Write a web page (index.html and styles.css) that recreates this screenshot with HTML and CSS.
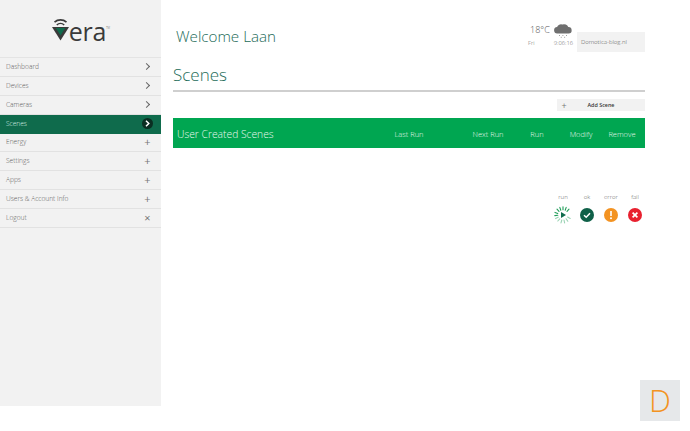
FILE: index.html
```html
<!DOCTYPE html>
<html lang="en">
<head>
    <meta charset="UTF-8">
    <title>Vera - Scenes</title>
    <link rel="stylesheet" href="styles.css">
</head>
<body>
    <div class="page">
        <aside class="sidebar">
            <div class="logo">
                <svg class="logo-mark" width="19" height="23" viewBox="0 0 19 23">
                    <path d="M3.500 4.200a9 9 0 0 1 12 0" fill="none" stroke="#3a3a3a" stroke-width="1.600"/>
                    <path d="M5.800 7a5.400 5.400 0 0 1 7.400 0" fill="none" stroke="#3a3a3a" stroke-width="1.600"/>
                    <path d="M1 9h17l-8.500 13.500z" fill="#3a3a3a"/>
                    <path d="M4.800 10h9.400l-4.700 7.500z" fill="#0f6b4c"/>
                </svg>
                <span class="logo-text">era</span><span class="logo-tm">TM</span>
            </div>
            <ul class="menu">
                <li class="menu-item"><span>Dashboard</span><i class="chev"></i></li>
                <li class="menu-item"><span>Devices</span><i class="chev"></i></li>
                <li class="menu-item"><span>Cameras</span><i class="chev"></i></li>
                <li class="menu-item active"><span>Scenes</span>
                    <svg width="11" height="11" viewBox="0 0 11 11"><circle cx="5.500" cy="5.500" r="5.500" fill="#0b2e22"/><path d="M4 2.800l2.800 2.700L4 8.200" fill="none" stroke="#fff" stroke-width="1.500"/></svg>
                </li>
                <li class="menu-item"><span>Energy</span><b class="sign">+</b></li>
                <li class="menu-item"><span>Settings</span><b class="sign">+</b></li>
                <li class="menu-item"><span>Apps</span><b class="sign">+</b></li>
                <li class="menu-item"><span>Users &amp; Account Info</span><b class="sign">+</b></li>
                <li class="menu-item"><span>Logout</span><b class="sign">×</b></li>
            </ul>
        </aside>

        <main class="content">
            <header class="top">
                <h2 class="welcome">Welcome Laan</h2>
                <div class="weather">
                    <div class="weather-row">
                        <span class="temp">18°C</span>
                        <svg width="20" height="16" viewBox="0 0 20 16">
                            <path d="M4.500 11.500a3.200 3.200 0 0 1-.4-6.400 4 4 0 0 1 5.200-2.600 4.600 4.600 0 0 1 6 2.600 3.200 3.200 0 0 1 .3 6.400z" fill="#6f6f6f"/>
                            <path d="M6 13.500h.8M9.500 13.500h.8M13 13.500h.8M7.800 15.300h.8M11.300 15.300h.8" stroke="#888" stroke-width="1"/>
                        </svg>
                    </div>
                    <div class="weather-row small">
                        <span>Fri</span><span>9:06:16</span>
                    </div>
                </div>
                <div class="site-box">Domotica-blog.nl</div>
            </header>

            <h1 class="title">Scenes</h1>

            <div class="actions">
                <div class="add-scene"><span class="add-plus">+</span><span class="add-label">Add Scene</span></div>
            </div>

            <div class="scene-head">
                <span class="scene-name">User Created Scenes</span>
                <span class="col col-last">Last Run</span>
                <span class="col col-next">Next Run</span>
                <span class="col col-run">Run</span>
                <span class="col col-modify">Modify</span>
                <span class="col col-remove">Remove</span>
            </div>

            <div class="legend">
                <div class="legend-item">
                    <span>run</span>
                    <svg width="18" height="18" viewBox="0 0 18 18">
                        <g stroke="#1f9d58" stroke-width="1.100" stroke-linecap="round" fill="none">
                            <path d="M9 .8v3M12.200 1.400l-1 2.800M15 3.200l-2 2.200M5.800 1.400l1 2.800M3 3.200l2 2.200M1 6.400l2.800 1M.8 9.600l3-.4" />
                            <path d="M1.600 12.600l2.600-1.400M3.800 15l2-2.200M7 16.900l.8-2.900M10.600 16.900l-.6-2.900M13.800 15.200l-1.700-2.400M16.200 12.400l-2.600-1.300" opacity=".45"/>
                        </g>
                        <path d="M7 6l5 3-5 3z" fill="#0f6b4c"/>
                    </svg>
                </div>
                <div class="legend-item">
                    <span>ok</span>
                    <svg width="14" height="14" viewBox="0 0 14 14"><circle cx="7" cy="7" r="7" fill="#0f6048"/><path d="M4 7.200l2.200 2 3.800-4" fill="none" stroke="#fff" stroke-width="1.500"/></svg>
                </div>
                <div class="legend-item">
                    <span>error</span>
                    <svg width="14" height="14" viewBox="0 0 14 14"><circle cx="7" cy="7" r="7" fill="#f39322"/><path d="M7 3v5" stroke="#fff" stroke-width="1.600"/><circle cx="7" cy="10.300" r="1" fill="#fff"/></svg>
                </div>
                <div class="legend-item">
                    <span>fail</span>
                    <svg width="14" height="14" viewBox="0 0 14 14"><circle cx="7" cy="7" r="7" fill="#e8202f"/><path d="M4.600 4.600l4.800 4.800M9.400 4.600l-4.800 4.800" stroke="#fff" stroke-width="1.700"/></svg>
                </div>
            </div>
        </main>
    </div>

    <div class="corner-tile">D</div>
</body>
</html>
```

FILE: styles.css
```css
* {
    box-sizing: border-box;
}
html, body {
    margin: 0;
    padding: 0;
}
body {
    width: 690px;
    height: 431px;
    position: relative;
    overflow: hidden;
    background: #fff;
    font-family: "Open Sans", sans-serif;
    font-weight: 300;
    color: #555;
}
.page {
    display: flex;
    align-items: flex-start;
}
.sidebar {
    width: 161px;
    height: 406px;
    flex: none;
    background: #f2f2f2;
}
.logo {
    height: 57px;
    display: flex;
    justify-content: center;
    align-items: flex-end;
    padding-bottom: 16px;
}
.logo-mark {
    margin-right: -1px;
}
.logo-text {
    font-weight: 400;
    font-size: 25px;
    line-height: 19px;
    color: #3a3a3a;
    letter-spacing: -0.3px;
}
.logo-tm {
    font-size: 3px;
    align-self: center;
    margin-top: 14px;
    color: #555;
}
.menu {
    list-style: none;
    margin: 0;
    padding: 0;
    border-top: 1px solid #e4e4e4;
}
.menu-item {
    height: 18.875px;
    display: flex;
    align-items: center;
    justify-content: space-between;
    padding: 0 8px 1px 6px;
    font-size: 6.600px;
    color: #5c5c5c;
    border-bottom: 1px solid #e2e2e2;
}
.menu-item.active {
    background: #0f6b4c;
    color: #d9efe5;
    border-bottom-color: #0f6b4c;
    padding-right: 8px;
}
.chev {
    width: 5px;
    height: 5px;
    margin-right: 4px;
    border-top: 1px solid #666;
    border-right: 1px solid #666;
    transform: rotate(45deg);
}
.sign {
    width: 11px;
    text-align: center;
    font-size: 11px;
    line-height: 11px;
    font-weight: 400;
    color: #777;
}
.content {
    width: 472px;
    margin-left: 12px;
    flex: none;
}
.top {
    height: 57px;
    display: flex;
    align-items: flex-start;
}
.welcome {
    margin: 25px 0 0 3px;
    font-size: 15.200px;
    line-height: 22px;
    font-weight: 300;
    color: #1c6b58;
    flex: 1;
}
.weather {
    width: 45px;
    margin-top: 21px;
    margin-right: 4px;
}
.weather-row {
    display: flex;
    justify-content: space-between;
    align-items: center;
    height: 17px;
}
.temp {
    font-size: 9px;
    color: #555;
    margin-left: 2px;
}
.weather-row.small {
    height: 9px;
    font-size: 5.800px;
    color: #666;
}
.site-box {
    width: 68px;
    height: 20px;
    margin-top: 32px;
    padding-left: 4px;
    background: #f2f2f2;
    font-size: 6px;
    line-height: 20px;
    color: #555;
}
.title {
    margin: 0;
    height: 35px;
    font-size: 17px;
    line-height: 36px;
    font-weight: 300;
    color: #1c6b58;
    border-bottom: 2px solid #cfcfcf;
}
.actions {
    display: flex;
    justify-content: flex-end;
    margin-top: 7px;
}
.add-scene {
    width: 88px;
    height: 12px;
    display: flex;
    align-items: center;
    background: #f2f2f2;
    font-size: 5.400px;
    font-weight: 600;
    color: #333;
}
.add-plus {
    width: 14px;
    text-align: center;
    font-size: 9px;
    font-weight: 400;
    color: #777;
}
.add-label {
    flex: 1;
    text-align: center;
    padding-right: 14px;
}
.scene-head {
    height: 30px;
    margin-top: 7px;
    display: flex;
    align-items: center;
    background: #00a651;
    color: #e6f7ee;
    padding: 1px 0 0 4px;
    font-size: 7.500px;
}
.scene-name {
    width: 212px;
    font-size: 10.300px;
}
.col {
    flex: none;
    text-align: center;
    white-space: nowrap;
}
.col-last {
    width: 40px;
}
.col-next {
    width: 40px;
    margin-left: 39px;
}
.col-run {
    width: 20px;
    margin-left: 19px;
}
.col-modify {
    width: 30px;
    margin-left: 19px;
}
.col-remove {
    width: 34px;
    margin-left: 9px;
}
.legend {
    display: flex;
    justify-content: flex-end;
    gap: 6px;
    margin-top: 44px;
    padding-right: 1px;
}
.legend-item {
    width: 18px;
    display: flex;
    flex-direction: column;
    align-items: center;
    font-size: 6px;
    color: #666;
}
.legend-item span {
    height: 11px;
    line-height: 11px;
    margin-bottom: 3px;
}
.legend-item svg {
    height: 18px;
}
.corner-tile {
    position: absolute;
    left: 640px;
    top: 380px;
    width: 40px;
    height: 41px;
    background: #e6e8ea;
    color: #f39322;
    font-size: 31px;
    line-height: 41px;
    text-align: center;
}
```
